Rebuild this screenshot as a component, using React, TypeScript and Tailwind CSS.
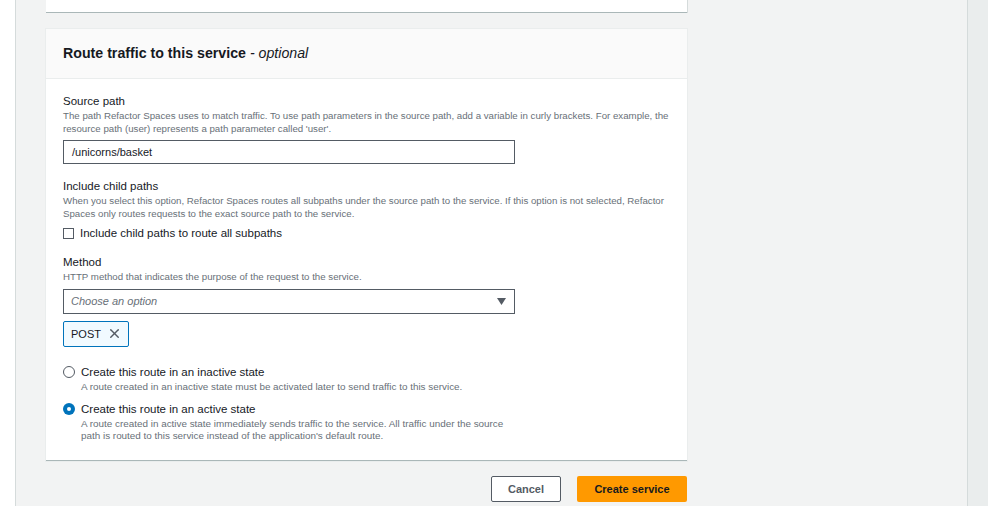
import { X } from "lucide-react";

const font = "font-['Liberation_Sans',Arial,sans-serif]";

function Field({ label, desc, children }: { label: string; desc: React.ReactNode; children: React.ReactNode }) {
  return (
    <div>
      <div className="text-[11.5px] leading-[14px] text-[#16191f]">{label}</div>
      <div className="mt-[2px] text-[9.7px] leading-[12.5px] text-[#687078]">{desc}</div>
      <div className="mt-[5px]">{children}</div>
    </div>
  );
}

function Radio({ checked, label, desc }: { checked?: boolean; label: string; desc: React.ReactNode }) {
  return (
    <div className="flex gap-[6px]">
      <span
        className={
          checked
            ? "mt-[1px] flex h-[12px] w-[12px] shrink-0 items-center justify-center rounded-full bg-[#0073bb]"
            : "mt-[1px] h-[12px] w-[12px] shrink-0 rounded-full border border-[#545b64] bg-white"
        }
      >
        {checked && <span className="h-[4px] w-[4px] rounded-full bg-white" />}
      </span>
      <div>
        <div className="text-[11.5px] leading-[14px] text-[#16191f]">{label}</div>
        <div className="mt-[2px] text-[9.9px] leading-[12px] text-[#687078]">{desc}</div>
      </div>
    </div>
  );
}

export default function App() {
  return (
    <div className={`flex h-[506px] w-[988px] overflow-hidden bg-white ${font}`}>
      <div className="w-[16px] shrink-0 border-r border-[#d5dbdb] bg-white" />
      <main className="flex-1 border-r border-[#d5dbdb] bg-[#f2f3f3] pl-[30px]">
        <div className="w-[641px]">
          <div className="h-[13px] border-b border-[#aab7b8] bg-white shadow-[1px_0_0_#d5dbdb]" />

          <section className="mt-[16px] border-b border-[#aab7b8] bg-white shadow-[0_0_0_1px_#eaeded]">
            <header className="flex h-[50px] items-center border-b border-[#eaeded] bg-[#fafafa] px-[17px]">
              <h2 className="text-[14.2px] font-bold text-[#16191f]">
                Route traffic to this service{" "}
                <span className="font-normal italic text-[#16191f]"> - optional</span>
              </h2>
            </header>

            <div className="flex flex-col px-[17px] pb-[18px] pt-[15px]">
              <Field
                label="Source path"
                desc={
                  <>
                    The path Refactor Spaces uses to match traffic. To use path parameters in the source path, add a variable in curly brackets. For example, the
                    <br />
                    resource path (user) represents a path parameter called 'user'.
                  </>
                }
              >
                <div className="flex h-[24px] w-[452px] items-center border border-[#545b64] px-[8px] text-[11px] text-[#16191f]">
                  /unicorns/basket
                </div>
              </Field>

              <div className="mt-[15px]">
                <Field
                  label="Include child paths"
                  desc={
                    <>
                      When you select this option, Refactor Spaces routes all subpaths under the source path to the service. If this option is not selected, Refactor
                      <br />
                      Spaces only routes requests to the exact source path to the service.
                    </>
                  }
                >
                  <label className="flex items-center gap-[6px] text-[11.5px] text-[#16191f]">
                    <span className="h-[11px] w-[11px] border border-[#545b64] bg-white" />
                    Include child paths to route all subpaths
                  </label>
                </Field>
              </div>

              <div className="mt-[13px]">
                <Field label="Method" desc="HTTP method that indicates the purpose of the request to the service.">
                  <div className="flex h-[25px] w-[452px] items-center justify-between border border-[#545b64] pl-[7px] pr-[8px]">
                    <span className="text-[11px] italic text-[#687078]">Choose an option</span>
                    <svg width="9" height="7" viewBox="0 0 9 7">
                      <path d="M0 0h9L4.5 7z" fill="#545b64" />
                    </svg>
                  </div>
                  <div className="mt-[7px] inline-flex h-[26px] items-center gap-[6px] rounded-[2px] border border-[#0073bb] bg-[#f1faff] pl-[7px] pr-[6px] text-[11px] text-[#16191f]">
                    POST
                    <X size={15} strokeWidth={2.2} className="text-[#545b64]" />
                  </div>
                </Field>
              </div>

              <div className="mt-[18px] flex flex-col gap-[9px]">
                <Radio
                  label="Create this route in an inactive state"
                  desc="A route created in an inactive state must be activated later to send traffic to this service."
                />
                <Radio
                  checked
                  label="Create this route in an active state"
                  desc={
                    <>
                      A route created in active state immediately sends traffic to the service. All traffic under the source
                      <br />
                      path is routed to this service instead of the application's default route.
                    </>
                  }
                />
              </div>
            </div>
          </section>

          <div className="mt-[15px] flex justify-end gap-[16px]">
            <button className="h-[26px] w-[70px] rounded-[2px] border border-[#545b64] bg-white text-[11px] font-bold text-[#545b64]">
              Cancel
            </button>
            <button className="h-[26px] w-[110px] rounded-[2px] bg-[#ff9900] text-[11px] font-bold text-[#16191f]">
              Create service
            </button>
          </div>
        </div>
      </main>
      <div className="w-[20px] shrink-0 bg-[#eaeded]" />
    </div>
  );
}
